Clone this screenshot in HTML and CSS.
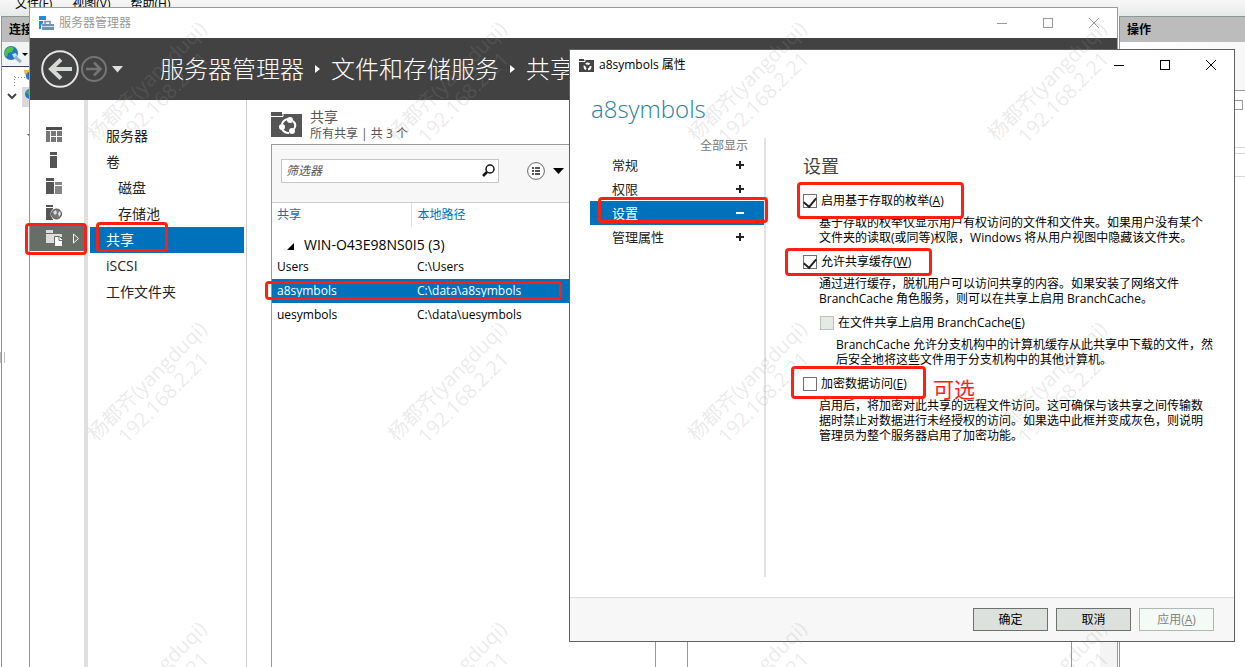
FILE: index.html
```html
<!DOCTYPE html>
<html lang="zh-CN">
<head>
<meta charset="utf-8">
<title>服务器管理器</title>
<link rel="stylesheet" href="styles.css">
</head>
<body>
<div class="desktop">

  <div class="console">
    <nav class="console-menu"><a href="#">文件(F)</a><a href="#">视图(V)</a><a href="#">帮助(H)</a></nav>
    <div class="console-body">
      <section class="console-left">
        <h2 class="console-head">连接</h2>
        <div class="console-tools">
          <svg width="27" height="20" viewBox="0 0 27 20"><circle cx="9" cy="8" r="7" fill="#2674c8"/><path d="M4 4q4-4 8-1l-2 4-4 1-1 4-3-3z" fill="#4cc441"/><path d="M10 9l4-1 1 3-3 2z" fill="#b8e6ff"/><path d="M13 12l6 5" stroke="#9bb4c4" stroke-width="3"/><path d="M20 8h6l-3 3z" fill="#000"/></svg>
        </div>
        <svg class="console-tree" width="28" height="80" viewBox="0 0 28 80"><path d="M12.500 9v12M13 10.500h12" stroke="#888" stroke-dasharray="1 2"/><rect x="20" y="20" width="8" height="20" fill="#d9d9d9"/><path d="M6 27l4 4 4-4" fill="none" stroke="#444" stroke-width="2"/><path d="M22 3h6v9q-6-3-6-9" fill="#edbd2b"/><circle cx="28" cy="9" r="4" fill="#2b75c7"/><circle cx="28" cy="27" r="5" fill="#2b75c7"/><path d="M24 25l4-3v7z" fill="#3fb54a"/><path d="M25 67l3 3v-3z" fill="#555"/></svg>
      </section>
      <section class="console-right">
        <h2 class="console-head">操作</h2>
        <div class="console-pane"></div>
        <div class="console-strip"><span class="strip-box"></span></div>
        <div class="console-strip console-strip-low"></div>
      </section>
    </div>
    <span class="splitter"></span>
  </div>

  <main class="manager">
    <header class="titlebar titlebar-inactive">
      <svg width="15" height="15" viewBox="0 0 15 15"><path d="M0 0h7v4H0zM0 5h4v2L2 9v4H0z" fill="#1b8fdc"/><path d="M3 8h12v6H3z" fill="#6f93ad"/><path d="M6 8V5.500h5V8" fill="none" stroke="#6f93ad" stroke-width="1.500"/><path d="M3 10.500h12" stroke="#d5e0e8"/></svg>
      <span class="titlebar-text">服务器管理器</span>
      <div class="window-buttons">
        <button aria-label="最小化"><svg width="11" height="11"><path d="M0 5.500h10" stroke="currentColor"/></svg></button>
        <button aria-label="最大化"><svg width="11" height="11"><rect x=".5" y=".5" width="9" height="9" fill="none" stroke="currentColor"/></svg></button>
        <button aria-label="关闭"><svg width="11" height="11"><path d="M0 0l10 10M10 0L0 10" stroke="currentColor"/></svg></button>
      </div>
    </header>
    <nav class="crumbbar">
      <button class="plain" aria-label="后退"><svg width="38" height="38" viewBox="0 0 38 38" fill="none"><circle cx="19" cy="19" r="17.800" stroke="#e4e6e4" stroke-width="2"/><path d="M31 19H10M20 9.500L10 19l10 9.500" stroke="#d6dad6" stroke-width="4"/></svg></button>
      <button class="plain" aria-label="前进"><svg width="26" height="26" viewBox="0 0 26 26" fill="none"><circle cx="13" cy="13" r="12" stroke="#757575" stroke-width="2"/><path d="M5 13h14M13 6.500l6.500 6.500-6.500 6.500" stroke="#757575" stroke-width="2.500"/></svg></button>
      <button class="plain history" aria-label="历史"><svg width="11" height="7"><path d="M0 0h11L5.500 6.500z" fill="#dcdfdc"/></svg></button>
      <div class="crumbs">
        <a href="#">服务器管理器</a>
        <svg width="5" height="8"><path d="M0 0l5 4-5 4z" fill="#fff"/></svg>
        <a href="#">文件和存储服务</a>
        <svg width="5" height="8"><path d="M0 0l5 4-5 4z" fill="#fff"/></svg>
        <a href="#">共享</a>
      </div>
    </nav>
    <div class="manager-body">
      <nav class="rail">
        <a href="#" aria-label="仪表板"><svg width="16" height="15"><path d="M0 0h16v3H0z" fill="#4d4d4d"/><path d="M0 4h4v11H0zM5 4h5v5H5zM11 4h5v5h-5zM5 10h5v5H5zM11 10h5v5h-5z" fill="#777"/></svg></a>
        <a href="#" aria-label="本地服务器"><svg width="16" height="16"><path d="M4 0h7v3H4zM4 4h7v12H4z" fill="#555"/></svg></a>
        <a href="#" aria-label="所有服务器"><svg width="16" height="16"><path d="M0 0h8v3H0zM0 4h8v12H0z" fill="#555"/><path d="M9 4h7v3H9zM9 8h7v8H9z" fill="#858585"/></svg></a>
        <a href="#" aria-label="IIS"><svg width="16" height="16"><path d="M0 1h7v2H0zM0 4h7v12H0z" fill="#555"/><circle cx="10.500" cy="10" r="6" fill="#fff"/><circle cx="10.500" cy="10" r="5" fill="#777" stroke="#555"/><path d="M7 8l3-2 1 3-2 2zM12 9l2-2 1 3-2 3z" fill="#ddd"/></svg></a>
        <a href="#" class="rail-on" aria-label="文件和存储服务"><svg width="34" height="18"><path d="M0 1h7v3H0zM0 5h16v3H8v6H0z" fill="#ddd"/><path d="M8.500 7.500h5l3 3v7h-8z" fill="#fff" stroke="#676d67"/><path d="M13 8v3.500h4" fill="none" stroke="#676d67"/><path d="M27.500 5l5 4.500-5 4.500z" fill="none" stroke="#fff"/></svg></a>
      </nav>
      <nav class="sublist">
        <a href="#">服务器</a>
        <a href="#">卷</a>
        <a href="#" class="nested">磁盘</a>
        <a href="#" class="nested">存储池</a>
        <a href="#" class="sub-on">共享</a>
        <a href="#">iSCSI</a>
        <a href="#">工作文件夹</a>
      </nav>
      <div class="tiles">
        <section class="tile">
          <header class="tile-head">
            <svg width="31" height="25" viewBox="0 0 31 25"><path d="M0 0h11v2h20v23H0z" fill="#555"/><path d="M0 4.500h12V2" fill="none" stroke="#fff"/><g fill="none" stroke="#fff" stroke-width="2"><path d="M11 12q1-4 6-5M22 9q4 4 1 8M18 21q-5 0-7-4"/></g><circle cx="19" cy="8" r="3" fill="#fff"/><circle cx="11" cy="15" r="3" fill="#fff"/><circle cx="21" cy="19" r="3" fill="#fff"/></svg>
            <div><h2 class="tile-title">共享</h2><p class="tile-sub">所有共享 | 共 3 个</p></div>
          </header>
          <div class="grid-panel">
            <div class="filterbar">
              <div class="filter">
                <input type="text" placeholder="筛选器" aria-label="筛选器">
                <svg width="13" height="13" viewBox="0 0 13 13" fill="none"><circle cx="8" cy="5" r="4" stroke="#111" stroke-width="1.500"/><path d="M5 8l-4 4" stroke="#111" stroke-width="2.500"/></svg>
              </div>
              <button class="plain view-options" aria-label="视图"><svg width="37" height="18" viewBox="0 0 37 18"><circle cx="9" cy="9" r="8.400" fill="#fff" stroke="#666"/><path d="M5 5h2v2H5zM5 8h2v2H5zM5 11h2v2H5zM8 5h5v2H8zM8 8h5v2H8zM8 11h5v2H8z" fill="#555"/><path d="M26 6h11l-5.500 6z" fill="#000"/></svg></button>
            </div>
            <table class="shares">
              <thead><tr><th>共享</th><th>本地路径</th></tr></thead>
              <tbody>
                <tr class="group"><td colspan="2"><svg width="7" height="7"><path d="M7 0v7H0z" fill="#000"/></svg>WIN-O43E98NS0I5 (3)</td></tr>
                <tr><td>Users</td><td>C:\Users</td></tr>
                <tr class="row-on"><td>a8symbols</td><td>C:\data\a8symbols</td></tr>
                <tr><td>uesymbols</td><td>C:\data\uesymbols</td></tr>
              </tbody>
            </table>
          </div>
        </section>
        <section class="tile tile-second"><div class="grid-panel"></div></section>
      </div>
      <div class="scrolltrack"></div>
    </div>
    <span class="mark mark-rail"></span>
    <span class="mark mark-share"></span>
    <span class="mark mark-row"></span>
  </main>

  <div class="dialog" role="dialog" aria-labelledby="dialog-title">
    <header class="titlebar">
      <svg width="15" height="13" viewBox="0 0 15 13"><path d="M0 0h5v1h10v12H0z" fill="#444"/><path d="M0 2.500h6V1" fill="none" stroke="#fff"/><circle cx="8.500" cy="7.500" r="3" fill="none" stroke="#fff" stroke-width="2" stroke-dasharray="4 2"/></svg>
      <span class="titlebar-text" id="dialog-title">a8symbols 属性</span>
      <div class="window-buttons">
        <button aria-label="最小化"><svg width="11" height="11"><path d="M0 5.500h10" stroke="currentColor"/></svg></button>
        <button aria-label="最大化"><svg width="11" height="11"><rect x=".5" y=".5" width="9" height="9" fill="none" stroke="currentColor"/></svg></button>
        <button aria-label="关闭"><svg width="11" height="11"><path d="M0 0l10 10M10 0L0 10" stroke="currentColor"/></svg></button>
      </div>
    </header>
    <h1 class="dialog-name">a8symbols</h1>
    <div class="dialog-body">
      <nav class="pages">
        <a href="#" class="show-all">全部显示</a>
        <a href="#" class="page">常规<svg width="8" height="8"><path d="M0 4h8M4 0v8" stroke="currentColor" stroke-width="2"/></svg></a>
        <a href="#" class="page">权限<svg width="8" height="8"><path d="M0 4h8M4 0v8" stroke="currentColor" stroke-width="2"/></svg></a>
        <a href="#" class="page page-on">设置<svg width="8" height="8"><path d="M0 4h8" stroke="currentColor" stroke-width="2"/></svg></a>
        <a href="#" class="page">管理属性<svg width="8" height="8"><path d="M0 4h8M4 0v8" stroke="currentColor" stroke-width="2"/></svg></a>
      </nav>
      <section class="settings">
        <h2 class="settings-title">设置</h2>
        <label class="option"><input type="checkbox" checked><span>启用基于存取的枚举(<u>A</u>)</span></label>
        <p class="hint">基于存取的权举仅显示用户有权访问的文件和文件夹。如果用户没有某个<br>文件夹的读取(或同等)权限，Windows 将从用户视图中隐藏该文件夹。</p>
        <label class="option"><input type="checkbox" checked><span>允许共享缓存(<u>W</u>)</span></label>
        <p class="hint">通过进行缓存，脱机用户可以访问共享的内容。如果安装了网络文件<br>BranchCache 角色服务，则可以在共享上启用 BranchCache。</p>
        <div class="suboption">
          <label class="option"><input type="checkbox" disabled><span>在文件共享上启用 BranchCache(<u>E</u>)</span></label>
          <p class="hint">BranchCache 允许分支机构中的计算机缓存从此共享中下载的文件，然<br>后安全地将这些文件用于分支机构中的其他计算机。</p>
        </div>
        <label class="option"><input type="checkbox"><span>加密数据访问(<u>E</u>)</span></label>
        <p class="hint">启用后，将加密对此共享的远程文件访问。这可确保与该共享之间传输数<br>据时禁止对数据进行未经授权的访问。如果选中此框并变成灰色，则说明<br>管理员为整个服务器启用了加密功能。</p>
      </section>
    </div>
    <footer class="dialog-foot">
      <button class="push">确定</button>
      <button class="push">取消</button>
      <button class="push" disabled>应用(<u>A</u>)</button>
    </footer>
    <span class="mark mark-page"></span>
    <span class="mark mark-enum"></span>
    <span class="mark mark-cache"></span>
    <span class="mark mark-encrypt"></span>
    <span class="note">可选</span>
  </div>

  <div class="watermark" aria-hidden="true">
    <div class="stamp"><p>杨都齐(yangduqi)<br>192.168.2.21</p></div>
    <div class="stamp"><p>杨都齐(yangduqi)<br>192.168.2.21</p></div>
    <div class="stamp"><p>杨都齐(yangduqi)<br>192.168.2.21</p></div>
    <div class="stamp"><p>杨都齐(yangduqi)<br>192.168.2.21</p></div>
    <div class="stamp"><p>杨都齐(yangduqi)<br>192.168.2.21</p></div>
    <div class="stamp"><p>杨都齐(yangduqi)<br>192.168.2.21</p></div>
    <div class="stamp"><p>杨都齐(yangduqi)<br>192.168.2.21</p></div>
    <div class="stamp"><p>杨都齐(yangduqi)<br>192.168.2.21</p></div>
    <div class="stamp"><p>杨都齐(yangduqi)<br>192.168.2.21</p></div>
    <div class="stamp"><p>杨都齐(yangduqi)<br>192.168.2.21</p></div>
    <div class="stamp"><p>杨都齐(yangduqi)<br>192.168.2.21</p></div>
    <div class="stamp"><p>杨都齐(yangduqi)<br>192.168.2.21</p></div>
  </div>
</div>
</body>
</html>
```

FILE: styles.css
```css
* { box-sizing: border-box; }
body {
  margin: 0;
  font: 12px/16px "Open Sans", "Noto Sans CJK SC", sans-serif;
  color: #000;
  background: #fff;
}
h1, h2, p { margin: 0; font-weight: 400; }
a { color: inherit; text-decoration: none; }
button, input { font: inherit; color: inherit; }
svg { display: block; flex: none; }
.plain { padding: 0; border: 0; background: none; }
.desktop { position: relative; height: 100vh; overflow: hidden; }

/* Console behind the windows */
.console { display: flex; flex-direction: column; height: 100%; }
.console-menu {
  display: flex;
  gap: 20px;
  height: 16px;
  padding-left: 15px;
  line-height: 8px;
  background: linear-gradient(#f7f7f7, #e7e9e8);
}
.console-body { display: flex; justify-content: space-between; flex: 1; }
.console-left { width: 40px; margin-left: 1px; border-left: 1px solid #8c9696; }
.console-right { width: 126px; border-left: 1px solid #8c9696; }
.console-head {
  height: 26px;
  padding-left: 7px;
  border-top: 1px solid #8c9696;
  font-size: 12px;
  line-height: 26px;
  font-weight: 700;
  white-space: nowrap;
  background: #bcbcbc;
}
.console-tools { height: 25px; padding: 3px 0 0; border-bottom: 1px solid #3a3f66; background: #f2f4f3; }
.console-pane { height: 49px; border-bottom: 1px solid #999; background: linear-gradient(90deg, #fff, #f6f7f6); }
.console-strip { display: flex; justify-content: flex-end; height: 57px; padding: 9px 2px 0; border-bottom: 1px solid #d8d8d8; }
.console-strip-low { height: 24px; margin-top: 5px; border-top: 1px solid #d8d8d8; }
.strip-box { width: 10px; height: 10px; border: 1px solid #999; }
.splitter { position: absolute; left: 0; top: 352px; width: 5px; height: 11px; border: 1px solid #bbb; border-width: 0 1px; }

/* Window chrome */
.manager, .dialog { position: absolute; display: flex; flex-direction: column; background: #fff; }
.manager { left: 29px; right: 127px; top: 7px; bottom: 0; border: 1px solid #999; border-bottom: 0; }
.dialog { left: 569px; right: 10px; top: 49px; bottom: 25px; border: 1px solid #606060; }
.titlebar { display: flex; align-items: center; gap: 5px; height: 30px; padding-left: 9px; }
.titlebar-inactive { color: #999; }
.window-buttons { display: flex; align-self: stretch; margin-left: auto; }
.window-buttons button { display: grid; place-items: center; width: 46px; padding: 0; border: 0; background: none; }

/* Breadcrumb bar */
.crumbbar { display: flex; align-items: center; height: 62px; padding-left: 11px; background: #424242; }
.history { margin-left: 5px; }
.crumbbar .plain + .plain:not(.history) { margin-left: 2px; }
.crumbs {
  display: flex;
  align-items: center;
  gap: 11px;
  margin-left: 37px;
  color: #fff;
  font-size: 24px;
  line-height: 32px;
  font-weight: 300;
  white-space: nowrap;
}

.manager-body { display: flex; flex: 1; min-height: 0; }
.rail { width: 58px; padding-top: 21px; border-right: 4px solid #e0e0e0; }
.rail a { display: flex; align-items: center; height: 26px; padding-left: 16px; }
.rail .rail-on { background: #676d67; }
.sublist {
  width: 159px;
  padding: 23px 2px 0;
  border-right: 1px solid #ccc;
  color: #222;
  font-size: 14px;
  line-height: 26px;
}
.sublist a { display: block; padding-left: 16px; }
.sublist .nested { padding-left: 28px; }
.sublist .sub-on { color: #fff; background: #0072bc; }

/* Tiles */
.tiles { display: grid; grid-template-columns: 1fr 1fr; gap: 31px; flex: 1; padding: 9px 28px 0 24px; }
.tile { display: flex; flex-direction: column; }
.tile-head { display: flex; gap: 8px; height: 35px; padding-top: 3px; color: #555; }
.tile-head div { margin-top: -4px; }
.tile-title { font-size: 14px; line-height: 18px; }
.tile-second { padding-top: 35px; }
.grid-panel { flex: 1; border: 1px solid #999; border-bottom: 0; }
.filterbar { display: flex; align-items: center; gap: 28px; height: 58px; padding: 0 9px 6px; border-bottom: 1px solid #ccc; background: #f7f7f7; }
.filter { display: flex; align-items: center; width: 218px; height: 24px; padding-right: 3px; border: 1px solid #c4c8c4; background: #fff; }
.filter input { flex: 1; min-width: 0; padding: 0 4px; border: 0; background: none; outline: 0; font-style: italic; }
.filter input::placeholder { color: #555; }
.shares { width: 100%; border-collapse: collapse; table-layout: fixed; }
.shares th, .shares td { height: 24px; padding: 0 5px; text-align: left; font-weight: 400; }
.shares th + th, .shares td + td { padding-left: 6px; }
.shares th { color: #0072bc; }
.shares th:first-child { width: 139px; border-right: 1px solid #ddd; }
.shares .group td { height: 28px; padding: 7px 0 0 15px; font-size: 14px; }
.group svg { display: inline-block; margin-right: 10px; }
.shares .row-on { color: #fff; background: #0072bc; }
.scrolltrack { width: 17px; background: #f4f4f4; }

/* Properties dialog */
.dialog-name { padding: 11px 0 0 21px; color: #2a7f9c; font-size: 24px; line-height: 36px; font-weight: 300; }
.dialog-body { display: flex; flex: 1; padding: 11px 20px 20px; }
.pages { width: 176px; border-right: 2px solid #e3e3e3; }
.show-all { display: block; padding-right: 16px; line-height: 15px; text-align: right; color: #777; }
.page { display: flex; align-items: center; justify-content: space-between; height: 24px; padding: 0 20px 0 22px; font-size: 13px; color: #222; }
.page-on { color: #fff; background: #0072bc; }
.settings { flex: 1; padding: 15px 0 0 37px; white-space: nowrap; }
.settings-title { margin-bottom: 14px; color: #444; font-size: 18px; line-height: 26px; }
.option { display: flex; align-items: center; gap: 4px; height: 16px; }
.option input {
  appearance: none;
  display: flex;
  justify-content: center;
  width: 14px;
  height: 14px;
  margin: 0;
  border: 1px solid #707070;
  background: #fff;
}
.option input:checked::after {
  content: "";
  width: 6px;
  height: 10px;
  border: solid #222;
  border-width: 0 2px 2px 0;
  transform: rotate(40deg);
}
.option input:disabled { border-color: #bcc2bc; background: #e6eae6; }
.hint { margin: 6px 0 9px; padding-left: 16px; line-height: 15px; }
.suboption { padding-left: 17px; }
.dialog-foot {
  display: flex;
  align-items: center;
  justify-content: flex-end;
  gap: 8px;
  height: 44px;
  padding-right: 20px;
  border-top: 1px solid #dcdcdc;
  background: #f7f7f7;
}
.push { width: 75px; height: 23px; padding: 0; border: 1px solid #707070; background: #dde1dd; }
.push:disabled { border-color: #b0b6b3; color: #838383; background: #f4faf6; }

/* Red callouts drawn over the windows */
.mark { position: absolute; border: 3px solid #ff2013; border-radius: 4px; }
.mark-rail { left: -5px; top: 215px; width: 62px; height: 32px; }
.mark-share { left: 66px; top: 214px; width: 72px; height: 30px; }
.mark-row { left: 235px; top: 273px; width: 297px; height: 19px; }
.mark-page { left: 28px; top: 147px; width: 170px; height: 26px; }
.mark-enum { left: 227px; top: 132px; width: 167px; height: 37px; }
.mark-cache { left: 215px; top: 198px; width: 147px; height: 28px; }
.mark-encrypt { left: 221px; top: 316px; width: 135px; height: 33px; }
.note { position: absolute; left: 363px; top: 328px; color: #ff2013; font-size: 21px; line-height: 22px; }

.watermark {
  position: absolute;
  inset: 0;
  display: grid;
  grid-template-columns: repeat(auto-fill, 300px);
  grid-auto-rows: 300px;
  pointer-events: none;
}
.stamp { display: flex; justify-content: center; align-items: flex-start; padding: 66px 0 0 10px; }
.stamp p {
  color: rgba(150, 150, 150, .2);
  font-size: 20px;
  line-height: 23px;
  text-align: center;
  white-space: nowrap;
  transform: rotate(-45deg);
}
```
